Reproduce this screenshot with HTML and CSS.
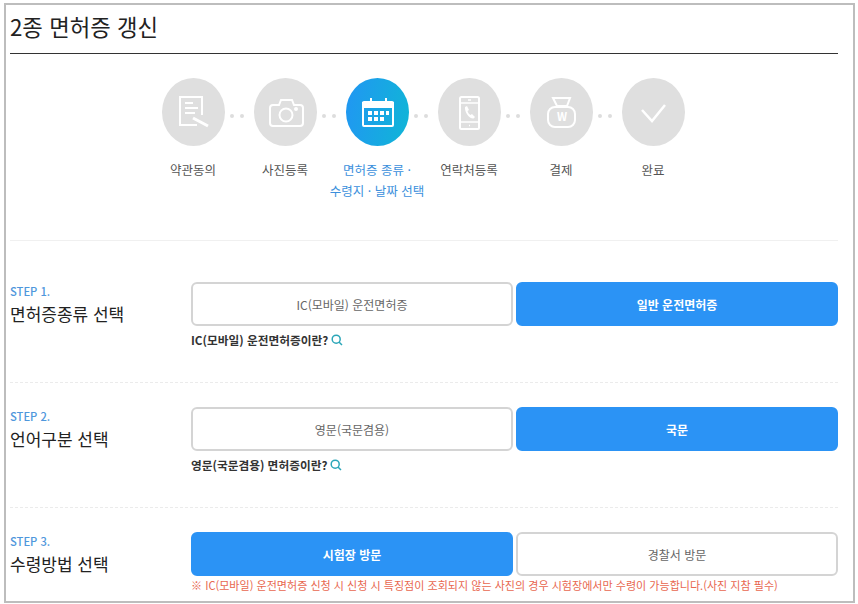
FILE: index.html
```html
<!DOCTYPE html>
<html lang="ko">
  <head>
    <meta charset="UTF-8" />
    <title>2종 면허증 갱신</title>
    <link rel="stylesheet" href="styles.css">
  </head>
  <body>
    <div class="frame">
      <h1 class="title">2종 면허증 갱신</h1>

      <ul class="steps">
        <li class="step">
          <div class="circle">
            <svg viewBox="0 0 63 68" class="icon">
              <path d="M40 37V19H18v28h17" />
              <path d="M23 25h8M23 30h13M23 35h10" />
              <path d="M31 40l15 8" stroke-width="3" />
            </svg>
          </div>
          <p class="step-label">약관동의</p>
        </li>
        <li class="step">
          <div class="circle">
            <svg viewBox="0 0 63 68" class="icon">
              <path d="M19 27h6l2-5h11l2 5h6a3 3 0 0 1 3 3v15a3 3 0 0 1-3 3H19a3 3 0 0 1-3-3V30a3 3 0 0 1 3-3z" />
              <circle cx="32" cy="37" r="6.5" />
              <circle cx="42" cy="31" r="1" />
            </svg>
          </div>
          <p class="step-label">사진등록</p>
        </li>
        <li class="step is-active">
          <div class="circle">
            <svg viewBox="0 0 63 68" class="icon">
              <rect x="17" y="24" width="30" height="24" rx="1" />
              <path d="M16 27h32" stroke-width="6" />
              <path d="M25 20v4M40 20v4" />
              <path class="fill" d="M22 33h4v4h-4zM28 33h4v4h-4zM34 33h4v4h-4zM40 33h3v4h-3zM22 39h4v4h-4zM28 39h4v4h-4zM34 39h4v4h-4z" />
            </svg>
          </div>
          <p class="step-label">면허증 종류 ·<br />수령지 · 날짜 선택</p>
        </li>
        <li class="step">
          <div class="circle">
            <svg viewBox="0 0 63 68" class="icon">
              <rect x="22" y="19" width="19" height="32" rx="1.5" />
              <path d="M22 25h19M22 44h19M30 22h3M31 47.500h1" stroke-width="1.500" />
              <path class="fill" d="M27 29l2-1 2 4-1.500 1c.5 2 1.500 3 3 4l1.500-1 3 3-1.500 1.500c-4 .5-9-6-8.500-11.500z" />
            </svg>
          </div>
          <p class="step-label">연락처등록</p>
        </li>
        <li class="step">
          <div class="circle">
            <svg viewBox="0 0 63 68" class="icon">
              <path d="M23 20h17l-3 8H27z" />
              <rect x="18" y="29" width="27" height="20" rx="7" />
              <text x="32" y="43" class="won">W</text>
            </svg>
          </div>
          <p class="step-label">결제</p>
        </li>
        <li class="step is-last">
          <div class="circle">
            <svg viewBox="0 0 63 68" class="icon">
              <path d="M20 32l10 11 13-16" stroke-width="2.500" />
            </svg>
          </div>
          <p class="step-label">완료</p>
        </li>
      </ul>

      <section class="row is-first">
        <div class="row-head">
          <p class="step-no">STEP 1.</p>
          <h2 class="row-title">면허증종류 선택</h2>
        </div>
        <div class="row-body">
          <div class="choices">
            <button class="choice">IC(모바일) 운전면허증</button>
            <button class="choice is-on">일반 운전면허증</button>
          </div>
          <p class="help">IC(모바일) 운전면허증이란?
            <svg viewBox="0 0 12 12" class="search"><circle cx="5.200" cy="5.200" r="4" /><path d="M8 8l3 3" /></svg>
          </p>
        </div>
      </section>

      <section class="row">
        <div class="row-head">
          <p class="step-no">STEP 2.</p>
          <h2 class="row-title">언어구분 선택</h2>
        </div>
        <div class="row-body">
          <div class="choices">
            <button class="choice">영문(국문겸용)</button>
            <button class="choice is-on">국문</button>
          </div>
          <p class="help">영문(국문겸용) 면허증이란?
            <svg viewBox="0 0 12 12" class="search"><circle cx="5.200" cy="5.200" r="4" /><path d="M8 8l3 3" /></svg>
          </p>
        </div>
      </section>

      <section class="row">
        <div class="row-head">
          <p class="step-no">STEP 3.</p>
          <h2 class="row-title">수령방법 선택</h2>
        </div>
        <div class="row-body">
          <div class="choices">
            <button class="choice is-on">시험장 방문</button>
            <button class="choice">경찰서 방문</button>
          </div>
          <p class="note">※ IC(모바일) 운전면허증 신청 시 신청 시 특징점이 조회되지 않는 사진의 경우 시험장에서만 수령이 가능합니다.(사진 지참 필수)</p>
        </div>
      </section>
    </div>
  </body>
</html>
```

FILE: styles.css
```css
* {
  margin: 0;
  padding: 0;
  box-sizing: border-box;
}

html,
body {
  height: 604px;
  overflow: hidden;
}

body {
  background: #fff;
  font-family: "Noto Sans CJK KR", "Noto Sans", sans-serif;
  color: #222;
  padding: 3px 3px 0 4px;
}

.frame {
  height: 600px;
  border: 2px solid #bdbdbd;
  padding: 0 15px 0 4px;
  overflow: hidden;
}

.title {
  height: 49px;
  border-bottom: 1px solid #333;
  font-size: 22.300px;
  font-weight: 400;
  line-height: 42px;
  color: #222;
}

/* progress steps */
.steps {
  display: flex;
  justify-content: center;
  list-style: none;
  padding: 24px 2px 0 0;
  height: 187px;
  border-bottom: 1px solid #f0f0f0;
}

.step {
  position: relative;
  width: 92px;
  display: flex;
  flex-direction: column;
  align-items: center;
}

.step::after {
  content: "";
  position: absolute;
  top: 36px;
  left: 83px;
  width: 4px;
  height: 4px;
  border-radius: 50%;
  background: #ddd;
  box-shadow: 10px 0 0 #ddd;
}

.step.is-last::after {
  display: none;
}

.circle {
  width: 63px;
  height: 68px;
  border-radius: 50%;
  background: #dfdfdf;
}

.is-active .circle {
  background: linear-gradient(100deg, #2196f3, #10b6d6);
}

.icon {
  display: block;
  width: 63px;
  height: 68px;
  fill: none;
  stroke: #fff;
  stroke-width: 2;
}

.icon .fill {
  fill: #fff;
  stroke: none;
}

.icon .won {
  fill: #fff;
  stroke: none;
  font-size: 11px;
  font-weight: 700;
  text-anchor: middle;
}

.step-label {
  margin-top: 13px;
  width: 120px;
  font-size: 12.500px;
  line-height: 21px;
  text-align: center;
  color: #555;
}

.is-active .step-label {
  color: #3b8fdc;
}

/* form rows */
.row {
  display: flex;
  height: 125px;
  padding-top: 24px;
  border-bottom: 1px dashed #ebebeb;
}

.row.is-first {
  height: 142px;
  padding-top: 41px;
}

.row:last-child {
  border-bottom: 0;
}

.row-head {
  width: 181px;
  flex-shrink: 0;
}

.step-no {
  font-size: 11.200px;
  font-weight: 500;
  line-height: 18px;
  color: #4f97dc;
}

.row-title {
  font-size: 17px;
  font-weight: 400;
  line-height: 28px;
  color: #222;
}

.row-body {
  flex: 1;
}

.choices {
  display: grid;
  grid-template-columns: 1fr 1fr;
  gap: 3px;
}

.choice {
  height: 44px;
  border: 2px solid #d4d4d4;
  border-radius: 6px;
  background: #fff;
  font-family: inherit;
  font-size: 12px;
  color: #666;
}

.choice.is-on {
  border-color: #2b93f5;
  background: #2b93f5;
  color: #fff;
  font-weight: 700;
}

.help {
  display: flex;
  align-items: center;
  gap: 3px;
  margin-top: 4px;
  font-size: 11.700px;
  font-weight: 700;
  line-height: 20px;
  color: #333;
}

.search {
  width: 12px;
  height: 12px;
  fill: none;
  stroke: #2ba6b8;
  stroke-width: 1.500;
}

.note {
  margin-top: 0;
  font-size: 11.050px;
  line-height: 18px;
  white-space: nowrap;
  color: #e8674f;
}
```
